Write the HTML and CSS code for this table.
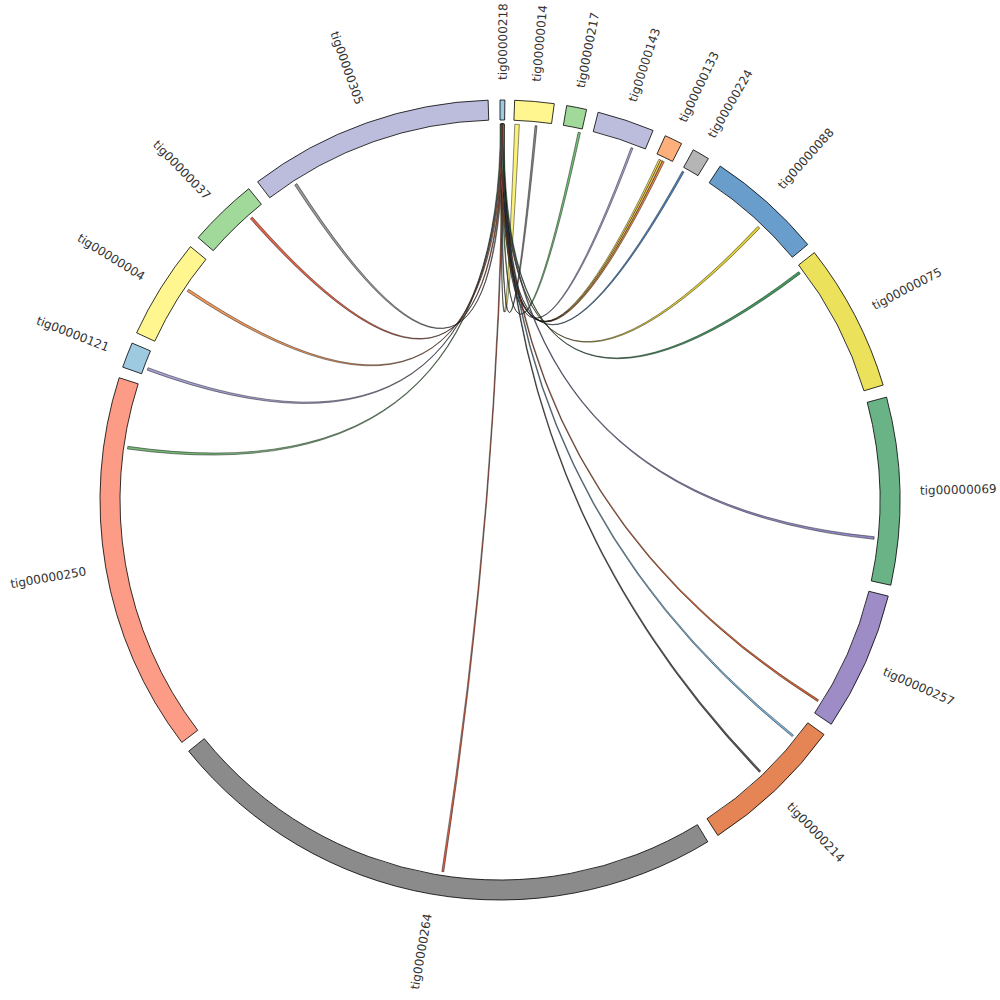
FILE: index.html
```html
<!DOCTYPE html>
<html lang="en">
<head>
<meta charset="utf-8">
<title>Chord diagram</title>
<link rel="stylesheet" href="styles.css">
</head>
<body>
<svg class="circos" width="1000" height="1000" viewBox="0 0 1000 1000">
  <g transform="translate(500,500)">
    <g id="ribbons" class="ribbons"></g>
    <g id="groups" class="groups"></g>
    <g class="labels">
      <text transform="rotate(-89.65) translate(420,0)" dy=".35em">tig00000218</text>
      <text transform="rotate(-85.05) translate(420,0)" dy=".35em">tig00000014</text>
      <text transform="rotate(-78.95) translate(420,0)" dy=".35em">tig00000217</text>
      <text transform="rotate(-71.65) translate(420,0)" dy=".35em">tig00000143</text>
      <text transform="rotate(-64.3) translate(420,0)" dy=".35em">tig00000133</text>
      <text transform="rotate(-59.85) translate(420,0)" dy=".35em">tig00000224</text>
      <text transform="rotate(-48.15) translate(420,0)" dy=".35em">tig00000088</text>
      <text transform="rotate(-27.45) translate(420,0)" dy=".35em">tig00000075</text>
      <text transform="rotate(-1.3) translate(420,0)" dy=".35em">tig00000069</text>
      <text transform="rotate(24) translate(420,0)" dy=".35em">tig00000257</text>
      <text transform="rotate(46.45) translate(420,0)" dy=".35em">tig00000214</text>
      <text class="end" transform="rotate(99.9) translate(420,0) rotate(180)" dy=".35em">tig00000264</text>
      <text class="end" transform="rotate(170.25) translate(420,0) rotate(180)" dy=".35em">tig00000250</text>
      <text class="end" transform="rotate(201.25) translate(420,0) rotate(180)" dy=".35em">tig00000121</text>
      <text class="end" transform="rotate(212) translate(420,0) rotate(180)" dy=".35em">tig00000004</text>
      <text class="end" transform="rotate(226.05) translate(420,0) rotate(180)" dy=".35em">tig00000037</text>
      <text class="end" transform="rotate(250.5) translate(420,0) rotate(180)" dy=".35em">tig00000305</text>
    </g>
  </g>
</svg>
<script src="script.js"></script>
</body>
</html>
```

FILE: styles.css
```css
html, body {
  margin: 0;
  padding: 0;
  background: #ffffff;
}

.circos {
  display: block;
}

.group {
  stroke: #000000;
  stroke-width: 0.8;
}

.ribbon {
  stroke: #000000;
  stroke-opacity: 0.75;
  stroke-width: 0.6;
}

.labels text {
  font-family: "DejaVu Sans", "Liberation Sans", sans-serif;
  font-size: 12px;
  fill: #333333;
}

.labels text.end {
  text-anchor: end;
}
```

FILE: script.js
```js
(function () {
  var NS = "http://www.w3.org/2000/svg";
  var R_IN = 380, R_OUT = 400, R_RIB = 376;

  function p(r, a) {
    var t = a * Math.PI / 180;
    return (r * Math.sin(t)).toFixed(2) + "," + (-r * Math.cos(t)).toFixed(2);
  }

  var groups = [
    ["tig00000218", 0, 0.7, "#9ecae1"],
    ["tig00000014", 2.1, 7.8, "#fff68f"],
    ["tig00000217", 9.6, 12.5, "#a1d99b"],
    ["tig00000143", 14.2, 22.5, "#bcbddc"],
    ["tig00000133", 24.4, 27.0, "#fdb07b"],
    ["tig00000224", 28.9, 31.4, "#b5b5b5"],
    ["tig00000088", 33.4, 50.3, "#699dcb"],
    ["tig00000075", 51.8, 73.3, "#ebe15a"],
    ["tig00000069", 75.1, 102.3, "#6ab386"],
    ["tig00000257", 103.9, 124.1, "#9d8cc5"],
    ["tig00000214", 125.9, 147.0, "#e58555"],
    ["tig00000264", 148.7, 231.1, "#8b8b8b"],
    ["tig00000250", 232.7, 287.8, "#fc9c87"],
    ["tig00000121", 289.4, 293.1, "#9ecae1"],
    ["tig00000004", 294.7, 309.3, "#fff68f"],
    ["tig00000037", 311.0, 321.1, "#a1d99b"],
    ["tig00000305", 322.7, 358.3, "#bcbddc"]
  ];

  var gEl = document.getElementById("groups");
  groups.forEach(function (g) {
    var large = (g[2] - g[1]) > 180 ? 1 : 0;
    var d = "M" + p(R_OUT, g[1]) +
      "A" + R_OUT + "," + R_OUT + " 0 " + large + ",1 " + p(R_OUT, g[2]) +
      "L" + p(R_IN, g[2]) +
      "A" + R_IN + "," + R_IN + " 0 " + large + ",0 " + p(R_IN, g[1]) + "Z";
    var el = document.createElementNS(NS, "path");
    el.setAttribute("d", d);
    el.setAttribute("fill", g[3]);
    el.setAttribute("class", "group");
    el.setAttribute("data-name", g[0]);
    gEl.appendChild(el);
  });

  var links = [
    [2.25, 2.95, "#faf07a"],
    [5.35, 5.65, "#8c8c8c"],
    [12.0, 12.35, "#74c476"],
    [20.4, 20.7, "#a8a5d3"],
    [25.0, 25.3, "#f2e35a"],
    [25.3, 25.6, "#fdd36b"],
    [25.6, 25.9, "#f08a4b"],
    [29.0, 29.3, "#4a84c0"],
    [43.3, 43.7, "#e2d033"],
    [52.6, 53.0, "#3f9b5b"],
    [95.6, 96.0, "#8f8ac6"],
    [122.1, 122.4, "#d8622f"],
    [128.7, 129.0, "#7ab4dc"],
    [136.1, 136.4, "#555555"],
    [188.6, 188.9, "#e0664a"],
    [277.8, 278.2, "#78b87a"],
    [290.2, 290.6, "#a6a2d2"],
    [303.7, 304.1, "#f59a5c"],
    [318.4, 318.8, "#e0634a"],
    [326.9, 327.3, "#999999"]
  ];

  var rEl = document.getElementById("ribbons");
  links.forEach(function (l, i) {
    var s0 = 0.06 + (i % 5) * 0.1, s1 = s0 + 0.18;
    var arc = "A" + R_RIB + "," + R_RIB + " 0 0,1 ";
    var d = "M" + p(R_RIB, s0) + arc + p(R_RIB, s1) +
      "Q0,0 " + p(R_RIB, l[0]) + arc + p(R_RIB, l[1]) +
      "Q0,0 " + p(R_RIB, s0) + "Z";
    var el = document.createElementNS(NS, "path");
    el.setAttribute("d", d);
    el.setAttribute("fill", l[2]);
    el.setAttribute("class", "ribbon");
    rEl.appendChild(el);
  });
})();
```
